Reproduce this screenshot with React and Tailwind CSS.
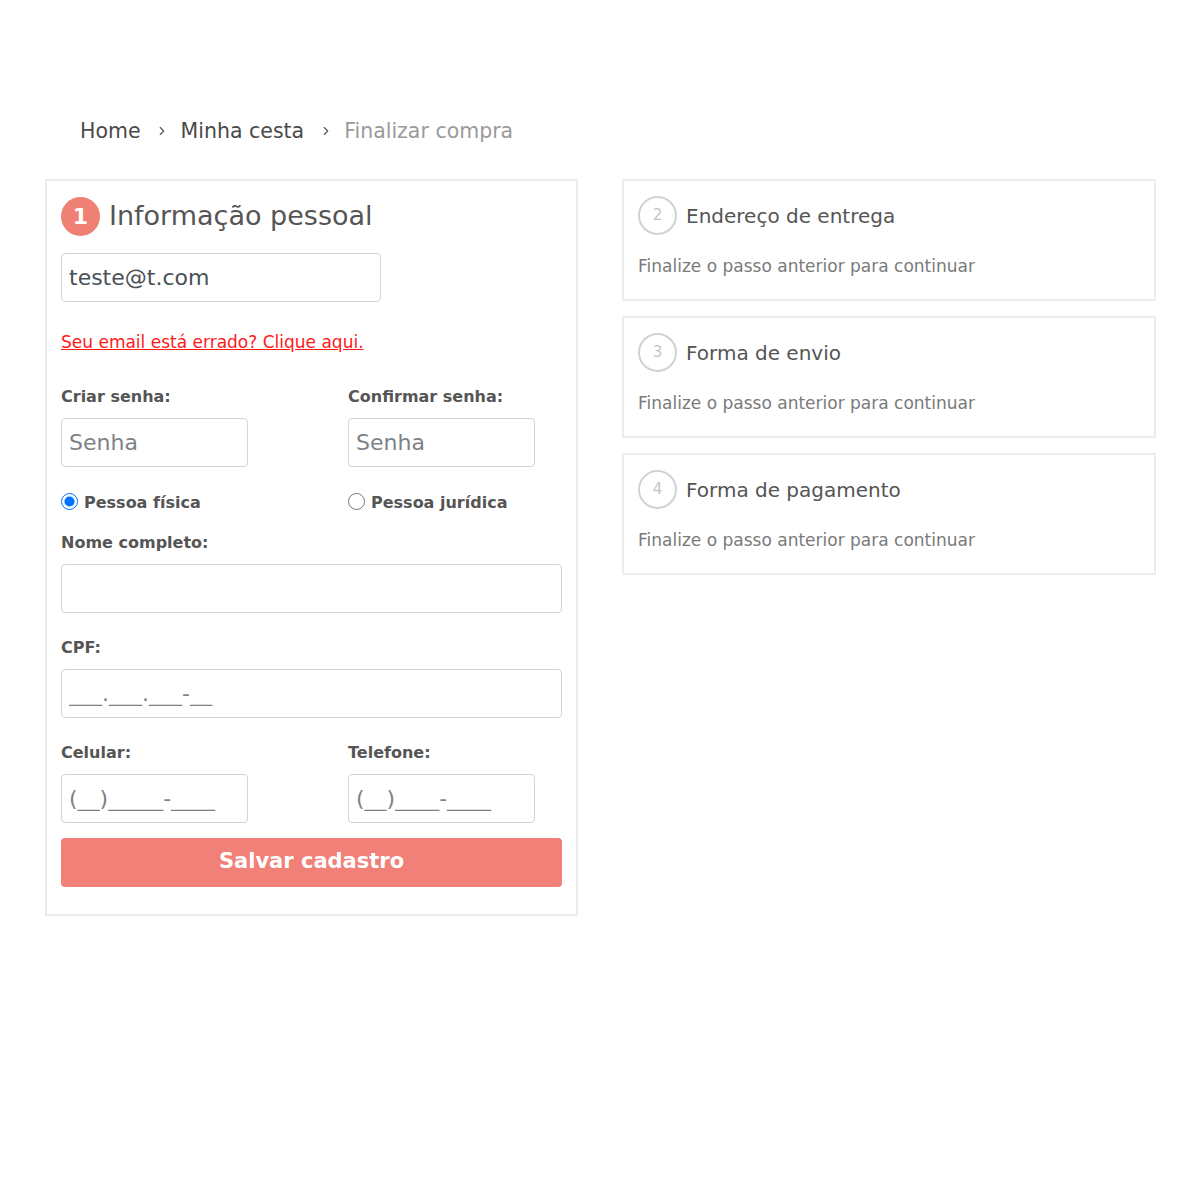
import React from 'react';
import { ChevronRight } from 'lucide-react';

const font = { fontFamily: '"DejaVu Sans", "Liberation Sans", sans-serif' };

const inputCls =
  'h-[49px] rounded-[4px] border border-[#cfd4da] bg-white px-[7px] text-[22px] text-[#495057] placeholder:text-[#7d8288] outline-none';

const Label = ({ children }) => (
  <label className="block h-[24px] text-[16px] font-bold leading-[24px] text-[#555]">{children}</label>
);

const StepCard = ({ n, title }) => (
  <div className="h-[122px] border-2 border-[#ececec] px-[14px] pt-[15px]">
    <div className="flex items-center gap-[9px]">
      <div className="flex h-[39px] w-[39px] items-center justify-center rounded-full border-2 border-[#d2d2d2] text-[15px] text-[#c4c4c4]">
        {n}
      </div>
      <h2 className="text-[20px] text-[#555]">{title}</h2>
    </div>
    <p className="mt-[19px] text-[17px] text-[#7a7a7a]">Finalize o passo anterior para continuar</p>
  </div>
);

const App = () => {
  return (
    <div className="min-h-[1200px] bg-white" style={font}>
      <div className="px-[45px] pt-[116px]">
        {/* BREADCRUMB */}
        <nav className="flex h-[30px] items-center pl-[35px] text-[20.5px]">
          <span className="text-[#4a4a4a]">Home</span>
          <ChevronRight size={14} className="ml-[14px] mr-[12px] text-[#555]" />
          <span className="text-[#4a4a4a]">Minha cesta</span>
          <ChevronRight size={14} className="ml-[15px] mr-[11px] text-[#555]" />
          <span className="text-[#9a9a9a]">Finalizar compra</span>
        </nav>

        <div className="mt-[33px] grid grid-cols-[533px_534px] gap-[44px]">
          {/* PERSONAL INFO */}
          <div className="h-[737px] border-2 border-[#ececec] px-[14px] pt-[15px]">
            <div className="flex items-center gap-[9px]">
              <div className="flex h-[39px] w-[39px] items-center justify-center rounded-full bg-[#ef8074] text-[22px] font-bold text-white">
                1
              </div>
              <h1 className="text-[27px] text-[#555]">Informação pessoal</h1>
            </div>

            <input className={`${inputCls} mt-[16px] w-[320px]`} defaultValue="teste@t.com" />

            <a href="#" className="mt-[28px] block h-[24px] text-[17px] leading-[24px] text-[#ff1a1a] underline">
              Seu email está errado? Clique aqui.
            </a>

            <div className="mt-[31px] grid grid-cols-[287px_1fr]">
              <div>
                <Label>Criar senha:</Label>
                <input type="password" placeholder="Senha" className={`${inputCls} mt-[9px] w-[187px]`} />
              </div>
              <div>
                <Label>Confirmar senha:</Label>
                <input type="password" placeholder="Senha" className={`${inputCls} mt-[9px] w-[187px]`} />
              </div>
            </div>

            <div className="mt-[21px] grid h-[24px] grid-cols-[287px_1fr] items-center">
              <label className="flex items-center gap-[6px] text-[16px] font-bold text-[#555]">
                <input type="radio" name="tipo" defaultChecked className="m-0 h-[17px] w-[17px]" />
                <span className="mt-[3px]">Pessoa física</span>
              </label>
              <label className="flex items-center gap-[6px] text-[16px] font-bold text-[#555]">
                <input type="radio" name="tipo" className="m-0 h-[17px] w-[17px]" />
                <span className="mt-[3px]">Pessoa jurídica</span>
              </label>
            </div>

            <div className="mt-[19px]">
              <Label>Nome completo:</Label>
              <input className={`${inputCls} mt-[9px] w-full`} />
            </div>

            <div className="mt-[23px]">
              <Label>CPF:</Label>
              <input placeholder="___.___.___-__" className={`${inputCls} mt-[9px] w-full`} />
            </div>

            <div className="mt-[23px] grid grid-cols-[287px_1fr]">
              <div>
                <Label>Celular:</Label>
                <input placeholder="(__)_____-____" className={`${inputCls} mt-[9px] w-[187px]`} />
              </div>
              <div>
                <Label>Telefone:</Label>
                <input placeholder="(__)____-____" className={`${inputCls} mt-[9px] w-[187px]`} />
              </div>
            </div>

            <button className="mt-[15px] h-[49px] w-full rounded-[4px] bg-[#f08078] text-[21px] font-semibold text-white">
              Salvar cadastro
            </button>
          </div>

          {/* NEXT STEPS */}
          <div className="flex flex-col gap-[15px]">
            <StepCard n={2} title="Endereço de entrega" />
            <StepCard n={3} title="Forma de envio" />
            <StepCard n={4} title="Forma de pagamento" />
          </div>
        </div>
      </div>
    </div>
  );
};

export default App;
